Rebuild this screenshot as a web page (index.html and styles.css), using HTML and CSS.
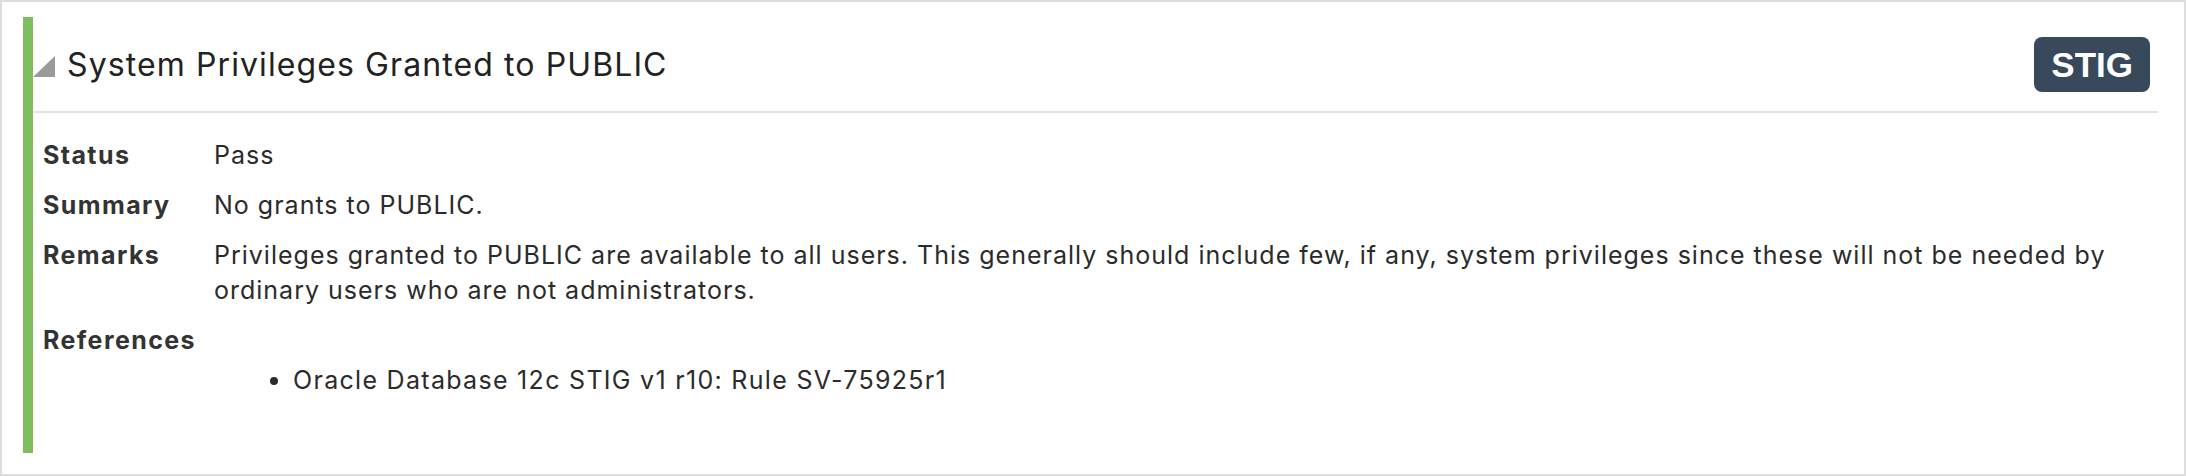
FILE: index.html
```html
<!DOCTYPE html>
<html lang="en">
<head>
<meta charset="utf-8">
<title>System Privileges Granted to PUBLIC</title>
<link rel="stylesheet" href="styles.css">
</head>
<body>
<div class="frame">
  <section class="card">
    <header class="card-header">
      <svg class="toggle" width="22" height="21" viewBox="0 0 22 21" aria-hidden="true"><polygon points="22,0 22,21 0,21" fill="#9a9a9a"/></svg>
      <h1 class="title">System Privileges Granted to PUBLIC</h1>
      <span class="badge">STIG</span>
    </header>
    <div class="card-body">
      <dl class="details">
        <dt>Status</dt><dd>Pass</dd>
        <dt>Summary</dt><dd>No grants to PUBLIC.</dd>
        <dt>Remarks</dt><dd>Privileges granted to PUBLIC are available to all users. This generally should include few, if any, system privileges since these will not be needed by ordinary users who are not administrators.</dd>
        <dt>References</dt><dd></dd>
      </dl>
      <ul class="refs">
        <li>Oracle Database 12c STIG v1 r10: Rule SV-75925r1</li>
      </ul>
    </div>
  </section>
</div>
</body>
</html>
```

FILE: styles.css
```css
html, body {
  margin: 0;
  padding: 0;
  background: #ffffff;
}

.frame {
  box-sizing: border-box;
  width: 2186px;
  height: 476px;
  border: 2px solid #dddddd;
  padding: 15px 26px 21px 21px;
  font-family: "Inter", "Liberation Sans", sans-serif;
  color: #2b2b2b;
}

.card {
  box-sizing: border-box;
  height: 100%;
  border-left: 10px solid #7fbe5f;
}

.card-header {
  box-sizing: border-box;
  height: 96px;
  display: flex;
  align-items: center;
  padding: 0 8px 0 0;
  border-bottom: 2px solid #e4e4e4;
}

.toggle {
  display: block;
  flex: none;
  margin-top: 4px;
}

.title {
  margin: 0 0 0 12px;
  font-size: 32px;
  font-weight: 400;
  color: #222222;
  flex: 1;
  letter-spacing: 1.1px;
}

.badge {
  flex: none;
  box-sizing: border-box;
  height: 55px;
  background: #37495a;
  color: #ffffff;
  font-family: "Liberation Sans", Arial, sans-serif;
  font-weight: 700;
  font-size: 35px;
  line-height: 55px;
  padding: 0 17px;
  border-radius: 8px;
}

.card-body {
  padding: 25px 0 0 10px;
  font-size: 25px;
  line-height: 35px;
  letter-spacing: 1px;
}

.details {
  margin: 0;
  display: grid;
  grid-template-columns: 171px 1fr;
  row-gap: 15px;
}

.details dt {
  font-weight: 700;
  color: #333333;
  letter-spacing: 1.4px;
}

.details dd {
  margin: 0;
  padding-right: 0;
}

.refs {
  margin: 5px 0 0;
  padding-left: 250px;
  letter-spacing: 1.3px;
}
```
